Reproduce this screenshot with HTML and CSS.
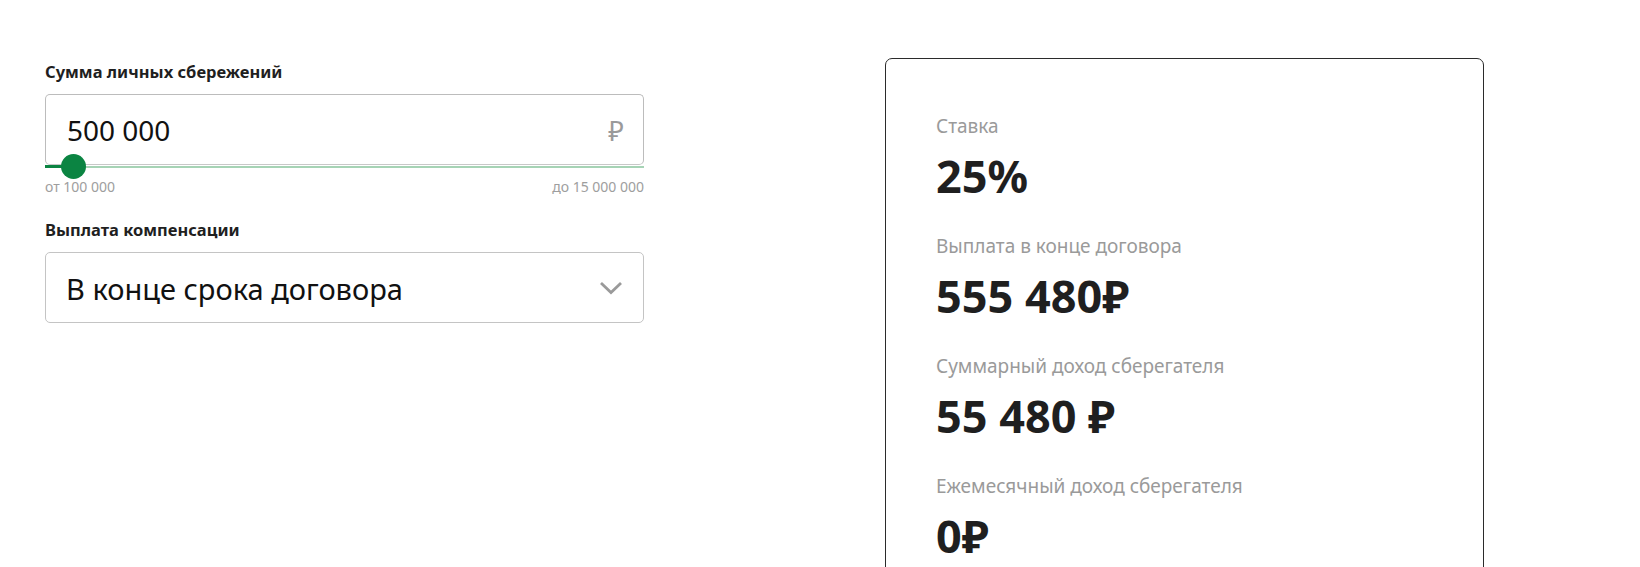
FILE: index.html
```html
<!DOCTYPE html>
<html lang="ru">
<head>
  <meta charset="UTF-8">
  <meta name="viewport" content="width=device-width, initial-scale=1.0">
  <title>Калькулятор сбережений</title>
  <link rel="stylesheet" href="styles.css">
</head>
<body>
  <div class="calculator">
    <div class="calc-form">
      <div class="field">
        <label class="field__label">Сумма личных сбережений</label>
        <div class="amount-box">
          <span class="amount-box__value">500 000</span>
          <span class="amount-box__currency">₽</span>
        </div>
        <div class="range">
          <div class="range__fill"></div>
          <div class="range__thumb"></div>
        </div>
        <div class="range-limits">
          <span>от 100 000</span>
          <span>до 15 000 000</span>
        </div>
      </div>

      <div class="field field--select">
        <label class="field__label">Выплата компенсации</label>
        <div class="select-box">
          <span class="select-box__value">В конце срока договора</span>
          <svg class="select-box__arrow" width="24" height="14" viewBox="0 0 24 14">
            <path d="M2 2 L12 11.5 L22 2" fill="none" stroke="#9a9a9a" stroke-width="2.8"/>
          </svg>
        </div>
      </div>
    </div>

    <div class="result-card">
      <div class="result">
        <div class="result__label">Ставка</div>
        <div class="result__value">25%</div>
      </div>
      <div class="result">
        <div class="result__label">Выплата в конце договора</div>
        <div class="result__value">555 480₽</div>
      </div>
      <div class="result">
        <div class="result__label">Суммарный доход сберегателя</div>
        <div class="result__value">55 480 ₽</div>
      </div>
      <div class="result">
        <div class="result__label">Ежемесячный доход сберегателя</div>
        <div class="result__value">0₽</div>
      </div>
    </div>
  </div>
</body>
</html>
```

FILE: styles.css
```css
body {
  margin: 0;
  font-family: "Noto Sans", "Open Sans", sans-serif;
  color: #1f1f1f;
  background-color: #ffffff;
  overflow: hidden;
}

.calculator {
  display: flex;
  gap: 241px;
  padding: 58px 0 0 45px;
}

.calc-form {
  width: 599px;
  padding-top: 3px;
}

.field {
  display: flex;
  flex-direction: column;
}

.field--select {
  margin-top: 23px;
}

.field__label {
  font-size: 16.5px;
  font-weight: 700;
  line-height: 22px;
  margin-bottom: 11px;
}

.amount-box {
  height: 71px;
  box-sizing: border-box;
  border: 1px solid #bcbcbc;
  border-bottom-color: #c8c8c8;
  border-radius: 5px;
  display: flex;
  align-items: center;
  justify-content: space-between;
  padding: 1px 19px 0 21px;
}

.amount-box__value {
  font-size: 28px;
  color: #111111;
}

.amount-box__currency {
  font-size: 27px;
  color: #9a9a9a;
}

.range {
  position: relative;
  height: 3px;
  display: flex;
  align-items: flex-end;
}

.range__fill {
  width: 29px;
  height: 3px;
  background-color: #0b8442;
}

.range__rest,
.range::after {
  content: "";
  flex: 1;
  height: 2px;
  background-color: #a6d3b5;
}

.range__thumb {
  position: absolute;
  left: 16px;
  top: -11px;
  width: 25px;
  height: 25px;
  border-radius: 50%;
  background-color: #0b8442;
}

.range-limits {
  display: flex;
  justify-content: space-between;
  font-size: 14px;
  line-height: 19px;
  color: #9e9e9e;
  margin-top: 9px;
}

.select-box {
  height: 71px;
  box-sizing: border-box;
  border: 1px solid #c4c4c4;
  border-radius: 5px;
  display: flex;
  align-items: center;
  justify-content: space-between;
  padding: 1px 20px 0 20px;
}

.select-box__value {
  font-size: 29px;
  color: #111111;
}

.result-card {
  width: 599px;
  height: 600px;
  box-sizing: border-box;
  border: 1px solid #2b2b2b;
  border-radius: 7px;
  padding: 54px 0 0 50px;
}

.result {
  height: 120px;
}

.result__label {
  font-size: 19px;
  line-height: 26px;
  color: #9a9a9a;
}

.result__value {
  font-size: 45px;
  font-weight: 700;
  line-height: 56px;
  margin-top: 9px;
  color: #1f1f1f;
}
```
